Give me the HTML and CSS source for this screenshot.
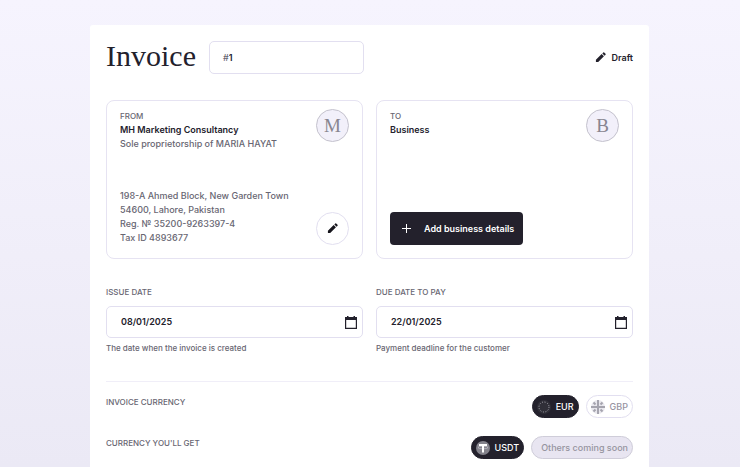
FILE: index.html
```html
<!DOCTYPE html>
<html lang="en">
<head>
    <meta charset="UTF-8">
    <meta name="viewport" content="width=device-width, initial-scale=1.0">
    <title>Invoice</title>
    <link rel="stylesheet" href="styles.css">
</head>
<body>
    <svg class="sprite" aria-hidden="true">
        <symbol id="pencil" viewBox="0 0 24 24">
            <path d="M2 22v-5L14.500 4.500l5 5L7 22zM16 3l2-2q1-.8 2 0l3 3q.8 1 0 2l-2 2z"/>
        </symbol>
        <symbol id="calendar" viewBox="0 0 12 13">
            <path d="M2 0h1.500v1h5V0H10v1h2v12H0V1h2zM1.200 4v7.800h9.600V4z" fill-rule="evenodd"/>
        </symbol>
    </svg>

    <main class="invoice">
        <header class="top">
            <h1>Invoice</h1>
            <label class="field number">
                <span>#</span>
                <input type="text" value="1" aria-label="Invoice number">
            </label>
            <div class="status">
                <svg class="icon"><use href="#pencil"/></svg>
                Draft
            </div>
        </header>

        <div class="columns">
            <section class="party">
                <div class="row">
                    <div>
                        <h2>FROM</h2>
                        <p class="name">MH Marketing Consultancy</p>
                        <p>Sole proprietorship of MARIA HAYAT</p>
                    </div>
                    <div class="avatar">M</div>
                </div>
                <div class="row bottom">
                    <address>
                        198-A Ahmed Block, New Garden Town<br>
                        54600, Lahore, Pakistan<br>
                        Reg. № 35200-9263397-4<br>
                        Tax ID 4893677
                    </address>
                    <button class="edit" aria-label="Edit details">
                        <svg class="icon"><use href="#pencil"/></svg>
                    </button>
                </div>
            </section>

            <section class="party">
                <div class="row">
                    <div>
                        <h2>TO</h2>
                        <p class="name">Business</p>
                    </div>
                    <div class="avatar">B</div>
                </div>
                <div class="row bottom">
                    <button class="add">
                        <svg class="plus" viewBox="0 0 9 9"><path d="M4 0h1v4h4v1H5v4H4V5H0V4h4z"/></svg>
                        Add business details
                    </button>
                </div>
            </section>
        </div>

        <div class="columns dates">
            <div>
                <label class="caption" for="issue">ISSUE DATE</label>
                <div class="field">
                    <input type="text" id="issue" value="08/01/2025">
                    <button class="pick" aria-label="Pick issue date">
                        <svg><use href="#calendar"/></svg>
                    </button>
                </div>
                <p class="hint">The date when the invoice is created</p>
            </div>
            <div>
                <label class="caption" for="due">DUE DATE TO PAY</label>
                <div class="field">
                    <input type="text" id="due" value="22/01/2025">
                    <button class="pick" aria-label="Pick due date">
                        <svg><use href="#calendar"/></svg>
                    </button>
                </div>
                <p class="hint">Payment deadline for the customer</p>
            </div>
        </div>

        <div class="currencies">
            <div class="row" role="radiogroup" aria-labelledby="invoice-currency">
                <span class="caption" id="invoice-currency">INVOICE CURRENCY</span>
                <div class="pills">
                    <label class="pill">
                        <input type="radio" name="currency" checked>
                        <svg viewBox="0 0 14 14">
                            <circle cx="7" cy="7" r="7" fill="#302f38"/>
                            <circle cx="7" cy="7" r="5" fill="none" stroke="#b5b4bd" stroke-width="1" stroke-dasharray="0.900 1.718"/>
                        </svg>
                        EUR
                    </label>
                    <label class="pill">
                        <input type="radio" name="currency">
                        <svg viewBox="0 0 14 14">
                            <circle cx="7" cy="7" r="7" fill="#e9e8ee"/>
                            <path d="M6 0h2v6h6v2H8v6H6V8H0V6h6z" fill="#a5a4ae"/>
                            <path d="M2.500 2.500l2 2M11.500 2.500l-2 2M2.500 11.500l2-2M11.500 11.500l-2-2" stroke="#a5a4ae" stroke-width="2"/>
                        </svg>
                        GBP
                    </label>
                </div>
            </div>
            <div class="row" role="radiogroup" aria-labelledby="payout-currency">
                <span class="caption" id="payout-currency">CURRENCY YOU'LL GET</span>
                <div class="pills">
                    <label class="pill">
                        <input type="radio" name="payout" checked>
                        <svg viewBox="0 0 14 14">
                            <circle cx="7" cy="7" r="7" fill="#84838c"/>
                            <ellipse cx="7" cy="6.500" rx="5" ry="1.300" fill="none" stroke="#d0cfd6" stroke-width=".6"/>
                            <path d="M3 3h8v2H8v6.500H6V5H3z" fill="#fff"/>
                        </svg>
                        USDT
                    </label>
                    <button class="pill soon" disabled>Others coming soon</button>
                </div>
            </div>
        </div>
    </main>
</body>
</html>
```
FILE: styles.css
```css
* {
    margin: 0;
    padding: 0;
    box-sizing: border-box;
}
body {
    min-height: 100vh;
    padding: 25px 17px 0 16px;
    display: flex;
    flex-direction: column;
    align-items: center;
    background: linear-gradient(#f6f4fe, #ebe9f5);
    font-family: Inter, "Liberation Sans", sans-serif;
    font-size: 9px;
    font-weight: 500;
    line-height: 14px;
    color: #686672;
}
input, button {
    font: inherit;
    color: inherit;
    border: none;
    background: none;
}
button {
    cursor: pointer;
}
svg {
    display: block;
    flex-shrink: 0;
    fill: currentColor;
}
.sprite {
    position: absolute;
    width: 0;
    height: 0;
}
.icon {
    width: 11px;
    height: 11px;
}
.invoice {
    flex: 1;
    width: 100%;
    max-width: 559px;
    padding: 16px 16px 8px;
    border-radius: 3px 3px 0 0;
    background: #fff;
}

/* Header */
.top {
    display: flex;
    align-items: center;
    gap: 13px;
    margin-bottom: 26px;
}
h1 {
    padding-bottom: 4px;
    font-family: "Liberation Serif", serif;
    font-size: 30px;
    font-weight: 400;
    line-height: 29px;
    color: #23212c;
}
.field {
    display: flex;
    align-items: center;
    height: 33px;
    padding: 0 5px 0 14px;
    border: 1px solid #e2dff0;
    border-radius: 5px;
}
.field input {
    flex: 1;
    min-width: 0;
    font-weight: 600;
    color: #23212c;
    outline: none;
}
.number {
    width: 155px;
    padding-left: 13px;
}
.status {
    display: flex;
    align-items: center;
    gap: 6px;
    margin-left: auto;
    font-weight: 600;
    color: #23212c;
}

/* From and to cards */
.columns {
    display: grid;
    grid-template-columns: 1fr 1fr;
    gap: 13px;
}
.party {
    display: flex;
    flex-direction: column;
    justify-content: space-between;
    min-height: 159px;
    padding: 8px 13px 13px;
    border: 1px solid #e6e3f2;
    border-radius: 8px;
}
.row {
    display: flex;
    justify-content: space-between;
}
.bottom {
    align-items: flex-end;
}
h2 {
    font-size: 8px;
    font-weight: 500;
    line-height: 14px;
}
.name {
    font-weight: 600;
    color: #23212c;
}
address {
    font-style: normal;
}
.avatar, .edit {
    display: flex;
    align-items: center;
    justify-content: center;
    width: 33px;
    height: 33px;
    border-radius: 50%;
}
.avatar {
    border: 1px solid #c4c2cd;
    background: #f2f0fa;
    font-family: "Liberation Serif", serif;
    font-size: 19px;
    color: #888690;
}
.edit {
    border: 1px solid #e2dff0;
    color: #16151c;
}
.add {
    display: flex;
    align-items: center;
    gap: 13px;
    height: 33px;
    padding: 0 9px 0 12px;
    border-radius: 4px;
    background: #23212c;
    font-weight: 600;
    color: #fff;
}
.plus {
    width: 9px;
    height: 9px;
}

/* Dates */
.dates {
    margin-top: 26px;
}
.caption {
    display: block;
    font-size: 8px;
}
.dates .field {
    height: 32px;
    margin: 7px 0 3px;
}
.hint {
    font-size: 8px;
}
.pick svg {
    width: 12px;
    height: 13px;
    color: #23212c;
}

/* Currencies */
.currencies {
    display: flex;
    flex-direction: column;
    gap: 18px;
    margin-top: 26px;
    padding-top: 13px;
    border-top: 1px solid #f0eef8;
}
.pills {
    display: flex;
    gap: 7px;
}
.pill {
    display: flex;
    align-items: center;
    gap: 5px;
    height: 23px;
    padding: 0 4px;
    border: 1px solid #e2dff0;
    border-radius: 12px;
    color: #96949f;
    cursor: pointer;
}
.pill input {
    position: absolute;
    opacity: 0;
}
.pill svg {
    width: 14px;
    height: 14px;
}
.pill:has(input:checked) {
    border-color: #23212c;
    background: #23212c;
    color: #fff;
}
.soon {
    padding: 0 4px 0 9px;
    border-color: #cfcdd9;
    background: #e8e5f1;
    cursor: default;
}
```
